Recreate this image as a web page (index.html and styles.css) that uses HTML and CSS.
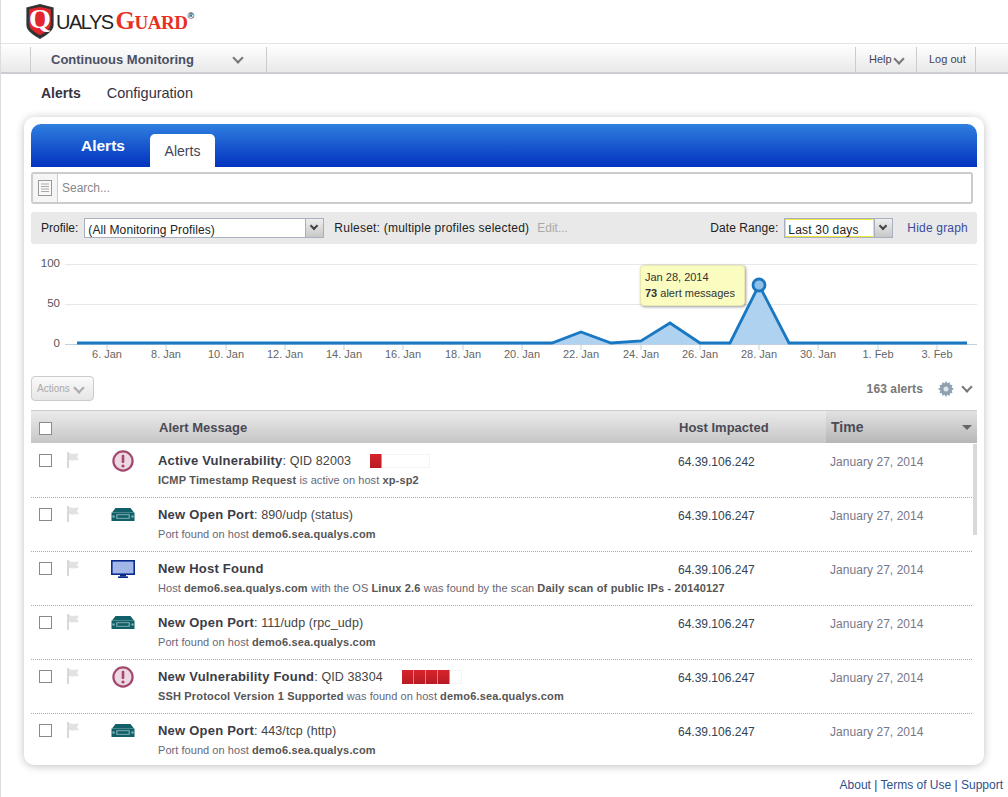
FILE: index.html
```html
<!DOCTYPE html>
<html lang="en">
<head>
<meta charset="UTF-8">
<title>QualysGuard - Continuous Monitoring</title>
<link rel="stylesheet" href="styles.css">
</head>
<body>

<svg class="defs" width="0" height="0">
  <symbol id="i-alert" viewBox="0 0 24 24">
    <circle cx="12" cy="12" r="9.6" fill="#edd8e1" stroke="#a3476f" stroke-width="2.2"/>
    <rect x="10.7" y="5.8" width="2.6" height="8.2" rx="1" fill="#a3476f"/>
    <circle cx="12" cy="17" r="1.6" fill="#a3476f"/>
  </symbol>
  <symbol id="i-port" viewBox="0 0 24 13">
    <path d="M4.5 0h15l3.5 4.5H1z" fill="#0f6068"/>
    <rect x="0.5" y="4.5" width="23" height="8.5" fill="#0f6068"/>
    <rect x="5" y="6" width="14" height="5" rx="1" fill="#6f9ea2"/>
    <rect x="6.5" y="7.2" width="11" height="2.6" fill="#0f6068"/>
    <rect x="1.5" y="7.5" width="2" height="2" fill="#9cc0c2"/>
    <rect x="20.5" y="7.5" width="2" height="2" fill="#9cc0c2"/>
  </symbol>
  <symbol id="i-host" viewBox="0 0 24 18">
    <rect x="0.8" y="0.8" width="22.4" height="13.4" fill="#a3b6e8" stroke="#0b2a8e" stroke-width="1.6"/>
    <rect x="9" y="15" width="6" height="1.6" fill="#0b2a8e"/>
    <rect x="7" y="16.4" width="10" height="1.6" fill="#0b2a8e"/>
  </symbol>
  <symbol id="i-flag" viewBox="0 0 13 16">
    <rect x="0" y="0" width="2" height="16" fill="#d8d8d8"/>
    <path d="M2 1l3 1 7-.5-2 3.5 2 3-7 .5-3-.5z" fill="#e2e2e2"/>
  </symbol>
</svg>

<div class="logo">
  <svg class="shield" width="28" height="35" viewBox="0 0 28 36">
    <path d="M0 3.5l14-3.5 14 3.5v18c0 7-9 11-14 14.500C9 32.500 0 28.500 0 21.500z" fill="#333"/>
    <path d="M3 5.500l11-2.500 11 2.500V21c0 5-7 8.500-11 11-4-2.500-11-6-11-11z" fill="#e3262e"/>
    <text x="14" y="25" class="shield-q">Q</text>
  </svg>
  <div class="logo-word">
    <span class="logo-qualys">UALYS</span><span class="logo-guard">GUARD</span><span class="logo-reg">®</span>
  </div>
</div>

<div class="navbar">
  <div class="module">Continuous Monitoring <span class="chev chev-module"></span></div>
  <div class="nav-right">
    <div class="nav-item nav-help">Help <span class="chev chev-help"></span></div>
    <div class="nav-item nav-logout">Log out</div>
  </div>
</div>

<div class="subnav">
  <span class="subnav-item active">Alerts</span>
  <span class="subnav-item">Configuration</span>
</div>

<div class="card">
  <div class="blue-head">
    <span class="blue-title">Alerts</span>
    <span class="tab">Alerts</span>
  </div>

  <div class="search">
    <div class="search-icon">
      <svg width="14" height="16" viewBox="0 0 14 16">
        <rect x="0.5" y="0.5" width="13" height="15" fill="#f8f8f8" stroke="#999"/>
        <path d="M3 4h8M3 6.500h8M3 9h8M3 11.500h8" stroke="#aaa"/>
      </svg>
    </div>
    <div class="search-text">Search...</div>
  </div>

  <div class="filters">
    <span class="filter-label">Profile:</span>
    <div class="select select-profile"><span class="select-val">(All Monitoring Profiles)</span><span class="select-btn"></span></div>
    <span class="filter-label ruleset">Ruleset: (multiple profiles selected)</span>
    <span class="edit-link">Edit...</span>
    <span class="filter-label date-label">Date Range:</span>
    <div class="select select-date"><span class="select-val">Last 30 days</span><span class="select-btn"></span></div>
    <span class="hide-link">Hide graph</span>
  </div>

  <div class="chart">
    <svg width="946" height="120" viewBox="31 250 946 120">
      <g class="grid">
        <path d="M65 264.500H977M65 304.500H977"/>
      </g>
      <path class="axis" d="M65 344.500H977"/>
      <g class="ticks">
        <path d="M107 344v6M166 344v6M226 344v6M285 344v6M344 344v6M403 344v6M463 344v6M522 344v6M581 344v6M641 344v6M700 344v6M759 344v6M818 344v6M878 344v6M937 344v6"/>
      </g>
      <path class="area" d="M552 344L581 332L611 343L641 341L670 323L700 343L730 343L759 285L789 343L789 344Z"/>
      <path class="line" d="M77 343H552L581 332L611 343L641 341L670 323L700 343H730L759 285L789 343H967"/>
      <circle class="marker" cx="759" cy="285" r="6"/>
      <g class="ylabels">
        <text x="60" y="267">100</text>
        <text x="60" y="307">50</text>
        <text x="60" y="347">0</text>
      </g>
      <g class="xlabels">
        <text x="107" y="358">6. Jan</text>
        <text x="166" y="358">8. Jan</text>
        <text x="226" y="358">10. Jan</text>
        <text x="285" y="358">12. Jan</text>
        <text x="344" y="358">14. Jan</text>
        <text x="403" y="358">16. Jan</text>
        <text x="463" y="358">18. Jan</text>
        <text x="522" y="358">20. Jan</text>
        <text x="581" y="358">22. Jan</text>
        <text x="641" y="358">24. Jan</text>
        <text x="700" y="358">26. Jan</text>
        <text x="759" y="358">28. Jan</text>
        <text x="818" y="358">30. Jan</text>
        <text x="878" y="358">1. Feb</text>
        <text x="937" y="358">3. Feb</text>
      </g>
    </svg>
    <div class="tooltip">Jan 28, 2014<br><b>73</b> alert messages</div>
  </div>

  <div class="toolbar">
    <div class="actions">Actions <span class="chev chev-light"></span></div>
    <div class="toolbar-right">
      <span class="count">163 alerts</span>
      <svg class="gear" width="16" height="16" viewBox="0 0 16 16">
        <path d="M8 0l1.300 2.200 2.400-.9.300 2.500 2.500.3-.9 2.400L16 8l-2.400 1.500.9 2.400-2.500.3-.3 2.500-2.400-.9L8 16l-1.300-2.200-2.400.9-.3-2.500-2.500-.3.9-2.400L0 8l2.400-1.500-.9-2.400 2.500-.3.300-2.500 2.400.9z" fill="#8fa0b0"/>
        <circle cx="8" cy="8" r="2.500" fill="#dfe5ea"/>
      </svg>
      <span class="chev"></span>
    </div>
  </div>

  <div class="thead">
    <div class="cell-check"><span class="check check-head"></span></div>
    <div class="th th-msg">Alert Message</div>
    <div class="th th-host">Host Impacted</div>
    <div class="th th-time">Time <span class="sort-arrow"></span></div>
  </div>

  <div class="rows">
    <div class="scroll-thumb"></div>

    <div class="row">
      <span class="check"></span>
      <svg class="flag" width="13" height="16"><use href="#i-flag"/></svg>
      <svg class="kind kind-alert" width="24" height="24"><use href="#i-alert"/></svg>
      <div class="msg">
        <div class="msg-title"><b>Active Vulnerability</b>: QID 82003 <span class="sev"><i class="on"></i><i></i><i></i><i></i><i></i></span></div>
        <div class="msg-sub"><b>ICMP Timestamp Request</b> is active on host <b>xp-sp2</b></div>
      </div>
      <div class="host">64.39.106.242</div>
      <div class="time">January 27, 2014</div>
    </div>

    <div class="row">
      <span class="check"></span>
      <svg class="flag" width="13" height="16"><use href="#i-flag"/></svg>
      <svg class="kind kind-port" width="24" height="13"><use href="#i-port"/></svg>
      <div class="msg">
        <div class="msg-title"><b>New Open Port</b>: 890/udp (status)</div>
        <div class="msg-sub">Port found on host <b>demo6.sea.qualys.com</b></div>
      </div>
      <div class="host">64.39.106.247</div>
      <div class="time">January 27, 2014</div>
    </div>

    <div class="row">
      <span class="check"></span>
      <svg class="flag" width="13" height="16"><use href="#i-flag"/></svg>
      <svg class="kind kind-host" width="24" height="18"><use href="#i-host"/></svg>
      <div class="msg">
        <div class="msg-title"><b>New Host Found</b></div>
        <div class="msg-sub">Host <b>demo6.sea.qualys.com</b> with the OS <b>Linux 2.6</b> was found by the scan <b>Daily scan of public IPs - 20140127</b></div>
      </div>
      <div class="host">64.39.106.247</div>
      <div class="time">January 27, 2014</div>
    </div>

    <div class="row">
      <span class="check"></span>
      <svg class="flag" width="13" height="16"><use href="#i-flag"/></svg>
      <svg class="kind kind-port" width="24" height="13"><use href="#i-port"/></svg>
      <div class="msg">
        <div class="msg-title"><b>New Open Port</b>: 111/udp (rpc_udp)</div>
        <div class="msg-sub">Port found on host <b>demo6.sea.qualys.com</b></div>
      </div>
      <div class="host">64.39.106.247</div>
      <div class="time">January 27, 2014</div>
    </div>

    <div class="row">
      <span class="check"></span>
      <svg class="flag" width="13" height="16"><use href="#i-flag"/></svg>
      <svg class="kind kind-alert" width="24" height="24"><use href="#i-alert"/></svg>
      <div class="msg">
        <div class="msg-title"><b>New Vulnerability Found</b>: QID 38304 <span class="sev"><i class="on"></i><i class="on"></i><i class="on"></i><i class="on"></i><i></i></span></div>
        <div class="msg-sub"><b>SSH Protocol Version 1 Supported</b> was found on host <b>demo6.sea.qualys.com</b></div>
      </div>
      <div class="host">64.39.106.247</div>
      <div class="time">January 27, 2014</div>
    </div>

    <div class="row row-last">
      <span class="check"></span>
      <svg class="flag" width="13" height="16"><use href="#i-flag"/></svg>
      <svg class="kind kind-port" width="24" height="13"><use href="#i-port"/></svg>
      <div class="msg">
        <div class="msg-title"><b>New Open Port</b>: 443/tcp (http)</div>
        <div class="msg-sub">Port found on host <b>demo6.sea.qualys.com</b></div>
      </div>
      <div class="host">64.39.106.247</div>
      <div class="time">January 27, 2014</div>
    </div>
  </div>
</div>

<div class="footer">
  <span>About</span> | <span>Terms of Use</span> | <span>Support</span>
</div>

</body>
</html>
```

FILE: styles.css
```css
html, body {
  margin: 0;
  padding: 0;
}
body {
  font-family: "Liberation Sans", Arial, sans-serif;
  font-size: 12px;
  color: #333;
  background: #fff;
  height: 797px;
  overflow: hidden;
  box-sizing: border-box;
  border-left: 1px solid #ddd;
}
.defs {
  position: absolute;
}

/* logo */
.logo {
  height: 43px;
  box-sizing: border-box;
  padding: 4px 0 0 25px;
  display: flex;
  align-items: flex-start;
}
.shield {
  flex: none;
}
.shield-q {
  font-family: "Liberation Serif", serif;
  font-weight: bold;
  font-size: 29px;
  fill: #fff;
  text-anchor: middle;
}
.logo-word {
  display: flex;
  align-items: baseline;
  margin: 3px 0 0 2px;
  line-height: 28px;
}
.logo-qualys {
  font-size: 20px;
  color: #222;
  letter-spacing: -1.5px;
  margin-right: 3px;
}
.logo-guard {
  font-family: "Liberation Serif", serif;
  font-weight: bold;
  font-size: 19px;
  color: #e8301f;
  letter-spacing: -0.5px;
}
.logo-guard::first-letter {
  font-size: 25px;
}
.logo-reg {
  font-size: 9px;
  color: #333;
  font-weight: bold;
  align-self: flex-start;
  line-height: 18px;
}

/* top nav */
.navbar {
  height: 31px;
  box-sizing: border-box;
  border-top: 1px solid #e4e4e4;
  border-bottom: 2px solid #ccccd2;
  background: linear-gradient(#fff, #e9e9e9);
  display: flex;
  justify-content: space-between;
  padding: 3px 32px 0 29px;
}
.module {
  width: 237px;
  box-sizing: border-box;
  border-left: 1px solid #ccc;
  border-right: 1px solid #ccc;
  padding-left: 20px;
  font-size: 13px;
  font-weight: bold;
  color: #4a4f63;
  line-height: 25px;
  position: relative;
}
.chev {
  display: inline-block;
  width: 6px;
  height: 6px;
  border-right: 2.5px solid #777;
  border-bottom: 2.5px solid #777;
  transform: rotate(45deg);
  margin: 0 2px 3px 3px;
  vertical-align: middle;
}
.chev-module {
  position: absolute;
  left: 203px;
  top: 7px;
  margin: 0;
}
.chev-help {
  margin-left: 0;
}
.nav-right {
  display: flex;
}
.nav-item {
  font-size: 11px;
  color: #445;
  line-height: 25px;
  border-left: 1px solid #ccc;
  box-sizing: border-box;
  padding-left: 12px;
}
.nav-help {
  width: 61px;
  padding-left: 13px;
}
.nav-logout {
  width: 60px;
  border-right: 1px solid #ccc;
}
.subnav {
  height: 43px;
  box-sizing: border-box;
  padding: 10px 0 0 40px;
  font-size: 14.5px;
  line-height: 18px;
  color: #334;
}
.subnav-item {
  margin-right: 22px;
}
.subnav-item.active {
  font-weight: bold;
  font-size: 14px;
}

/* main card */
.card {
  width: 960px;
  height: 648px;
  box-sizing: border-box;
  margin-left: 23px;
  padding: 7px;
  background: #fff;
  border-radius: 10px;
  box-shadow: 0 1px 8px rgba(0,0,0,0.25);
  overflow: hidden;
}
.blue-head {
  height: 43px;
  border-radius: 10px 10px 0 0;
  background: linear-gradient(#2f7fdf, #0232bf);
  position: relative;
}
.blue-title {
  position: absolute;
  left: 50px;
  top: 13px;
  font-size: 15.5px;
  font-weight: bold;
  color: #fff;
}
.tab {
  position: absolute;
  left: 119px;
  top: 10px;
  width: 65px;
  height: 33px;
  background: #fff;
  border-radius: 5px 5px 0 0;
  font-size: 14px;
  line-height: 34px;
  text-align: center;
  color: #445;
}
.search {
  margin-top: 5px;
  width: 942px;
  height: 32px;
  box-sizing: border-box;
  border: 2px solid #ccc;
  border-radius: 3px;
  display: flex;
}
.search-icon {
  width: 24px;
  background: #f5f5f5;
  border-right: 1px solid #ccc;
  display: flex;
  align-items: center;
  justify-content: center;
}
.search-text {
  padding-left: 4px;
  line-height: 28px;
  color: #888;
}
.filters {
  margin-top: 8px;
  height: 32px;
  background: #e9e9e9;
  border-radius: 3px;
  display: flex;
  align-items: center;
  padding: 0 9px 0 10px;
  color: #222;
}
.filter-label {
  white-space: nowrap;
}
.select {
  height: 20px;
  box-sizing: border-box;
  border: 1px solid #a8b0c0;
  background: #fff;
  display: flex;
}
.select-val {
  flex: 1;
  padding: 4px 0 0 3px;
  color: #222;
  font-size: 12px;
  letter-spacing: 0.1px;
}
.select-btn {
  width: 17px;
  background: linear-gradient(#eee, #c8c8c8);
  border-left: 1px solid #a8b0c0;
  position: relative;
}
.select-btn::after {
  content: "";
  position: absolute;
  left: 5px;
  top: 4px;
  width: 4px;
  height: 4px;
  border-right: 2px solid #444;
  border-bottom: 2px solid #444;
  transform: rotate(45deg);
}
.select-profile {
  width: 240px;
  margin-left: 6px;
}
.select-date {
  width: 109px;
  margin-left: 6px;
}
.select-date .select-val {
  border: 1px solid #f2e83a;
  padding: 3px 0 0 2px;
  letter-spacing: 0.2px;
}
.ruleset {
  margin-left: 10px;
  letter-spacing: 0.22px;
}
.edit-link {
  color: #aaa;
  margin-left: 8px;
}
.date-label {
  margin-left: auto;
  letter-spacing: 0.05px;
}
.hide-link {
  color: #3c4c9c;
  margin-left: 14px;
  letter-spacing: 0.2px;
}

/* graph */
.chart {
  margin-top: 6px;
  height: 120px;
  position: relative;
}
.chart svg {
  display: block;
}
.grid path {
  stroke: #e8e8e8;
  fill: none;
}
.axis {
  stroke: #c0d0e0;
  fill: none;
}
.ticks path {
  stroke: #c0d0e0;
  fill: none;
}
.area {
  fill: #aed2f0;
}
.line {
  fill: none;
  stroke: #1a78c2;
  stroke-width: 2.8;
}
.marker {
  fill: #8fc0e8;
  stroke: #1a78c2;
  stroke-width: 2.8;
}
.ylabels text {
  font-size: 11.5px;
  fill: #555;
  text-anchor: end;
}
.xlabels text {
  font-size: 11px;
  fill: #666;
  text-anchor: middle;
}
.tooltip {
  position: absolute;
  left: 609px;
  top: 15px;
  width: 105px;
  height: 41px;
  box-sizing: border-box;
  padding: 3px 0 0 4px;
  background: #fbfcc0;
  border: 1px solid #e8e8b0;
  border-radius: 4px;
  box-shadow: 1px 1px 3px rgba(0,0,0,0.4);
  font-size: 11px;
  line-height: 16px;
  color: #333;
}

/* toolbar above table */
.toolbar {
  margin-top: 6px;
  height: 25px;
  display: flex;
  justify-content: space-between;
  align-items: center;
}
.actions {
  width: 63px;
  height: 25px;
  box-sizing: border-box;
  border: 1px solid #ccc;
  border-radius: 4px;
  background: linear-gradient(#fafafa, #e6e6e6);
  color: #aaa;
  font-size: 10px;
  line-height: 23px;
  padding-left: 5px;
  white-space: nowrap;
}
.chev-light {
  border-color: #aaa;
  width: 6px;
  height: 6px;
  margin-left: 2px;
}
.toolbar-right {
  display: flex;
  align-items: center;
  padding-right: 4px;
}
.count {
  font-weight: bold;
  color: #777;
  margin-right: 15px;
  letter-spacing: 0.1px;
}
.gear {
  margin-right: 6px;
}

/* table */
.thead {
  margin-top: 9px;
  height: 33px;
  box-sizing: border-box;
  border-top: 1px solid #ccc;
  background: linear-gradient(#ebebeb, #c6c6c6);
  display: flex;
  align-items: stretch;
  position: relative;
}
.cell-check {
  width: 127px;
  padding: 11px 0 0 8px;
  box-sizing: border-box;
}
.check {
  display: block;
  width: 13px;
  height: 13px;
  box-sizing: border-box;
  border: 1px solid #8a8a8a;
  background: #fff;
}
.th {
  font-size: 13px;
  font-weight: bold;
  color: #4a4a55;
  line-height: 33px;
}
.th-msg {
  width: 521px;
  box-sizing: border-box;
  padding-left: 1px;
}
.th-host {
  width: 147px;
}
.th-time {
  flex: 1;
  padding-left: 5px;
  background: linear-gradient(#e2e2e2, #b6b6b6);
  font-size: 14px;
  position: relative;
}
.sort-arrow {
  position: absolute;
  right: 5px;
  top: 14px;
  border: 5px solid transparent;
  border-top: 5px solid #666;
  border-bottom: 0;
}
.rows {
  position: relative;
  width: 946px;
  margin-top: 1px;
}
.scroll-thumb {
  position: absolute;
  right: 0;
  top: 0;
  width: 4px;
  height: 91px;
  background: #dcd8d4;
}
.row {
  width: 941px;
  height: 54px;
  box-sizing: border-box;
  border-bottom: 1px dotted #aaa;
  display: grid;
  grid-template-columns: 36px 44px 47px 520px 152px 1fr;
  align-items: start;
}
.row-last {
  border-bottom: 0;
}
.row .check {
  margin: 10px 0 0 8px;
}
.flag {
  margin-top: 8px;
}
.kind {
  display: block;
}
.kind-alert {
  margin-top: 5px;
}
.kind-port {
  margin-top: 10px;
}
.kind-host {
  margin-top: 8px;
}
.msg-title {
  margin-top: 8px;
  font-size: 12.5px;
  letter-spacing: 0.1px;
  line-height: 17px;
  color: #444;
  white-space: nowrap;
}
.msg-title b {
  font-size: 13px;
  letter-spacing: 0.22px;
  color: #3c3c48;
}
.msg-sub {
  margin-top: 3px;
  font-size: 11px;
  letter-spacing: 0.05px;
  line-height: 14px;
  color: #667;
  white-space: nowrap;
}
.msg-sub b {
  color: #555;
  letter-spacing: 0.17px;
}
.host {
  margin-top: 11px;
  color: #345;
  line-height: 15px;
}
.time {
  margin-top: 11px;
  color: #778;
  line-height: 15px;
  letter-spacing: 0.05px;
}
.sev {
  display: inline-flex;
  margin-left: 15.5px;
  vertical-align: -3px;
  height: 14px;
}
.sev i {
  width: 12px;
  height: 14px;
  box-sizing: border-box;
  border-top: 1px solid #f3f3f3;
  border-bottom: 1px solid #f3f3f3;
}
.sev i:last-child {
  border-right: 1px solid #f3f3f3;
}
.sev i.on {
  background: linear-gradient(#d8222c, #b81c24);
  border: 0;
  border-right: 1px solid #c89090;
}

.footer {
  padding: 13px 5px 0 0;
  text-align: right;
  font-size: 12px;
  line-height: 14px;
  color: #335;
}
.footer span {
  color: #2f4f8f;
}
```
